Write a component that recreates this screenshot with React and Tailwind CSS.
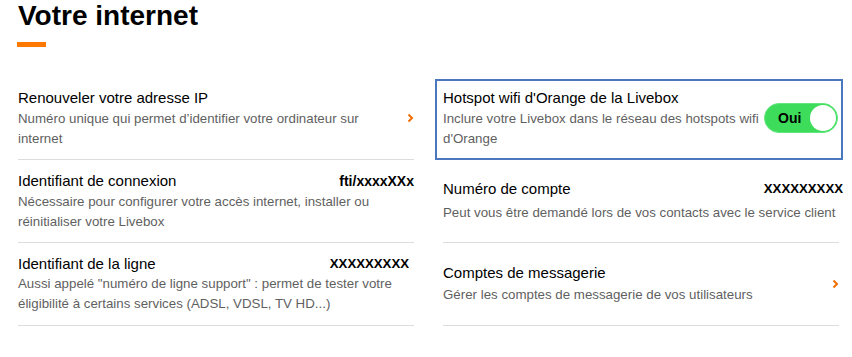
import React from 'react';

const Chevron = () => (
    <svg width="7" height="10" viewBox="0 0 7 10" className="shrink-0">
        <path d="M1.5 1.5l3.5 3.5-3.5 3.5" fill="none" stroke="#f16e00" strokeWidth="2" />
    </svg>
);

const Toggle = () => (
    <div className="shrink-0 w-[74px] h-[30px] rounded-full bg-[#3ddd5b] border border-[#63e67d] flex items-center justify-between pl-[13px] pr-[1px]">
        <span className="text-[14px] font-bold text-black">Oui</span>
        <div className="w-[26px] h-[26px] rounded-full bg-white" />
    </div>
);

const Row = ({ title, desc, value, valueSize = 'text-[14px]', chevron, gap = 'mt-[1px]' }) => (
    <div className="h-[83px] border-b border-[#dddddd] flex items-center">
        <div className={`flex-1 min-w-0 ${chevron ? 'pr-[30px]' : ''}`}>
            <div className="flex items-center justify-between leading-[20px]">
                <span className="text-[15px] text-black">{title}</span>
                {value && <span className={`${valueSize} font-bold text-black`}>{value}</span>}
            </div>
            <p className={`${gap} text-[13.3px] leading-[20px] text-[#5f5f5f]`}>{desc}</p>
        </div>
        {chevron && <Chevron />}
    </div>
);

export default function App() {
    return (
        <div className="w-[852px] h-[357px] bg-white overflow-hidden font-['Liberation_Sans',Arial,sans-serif]">
            <h1 className="pl-[18px] text-[28px] leading-[32px] font-bold text-black">Votre internet</h1>
            <div className="ml-[17px] mt-[10px] w-[29px] h-[5px] bg-[#ff7900]" />

            <div className="flex pl-[18px] mt-[30px]">
                {/* colonne gauche */}
                <div className="w-[396px]">
                    <Row
                        title="Renouveler votre adresse IP"
                        desc="Numéro unique qui permet d’identifier votre ordinateur sur internet"
                        chevron
                    />
                    <Row
                        title="Identifiant de connexion"
                        value="fti/xxxxXXx"
                        desc="Nécessaire pour configurer votre accès internet, installer ou réinitialiser votre Livebox"
                    />
                    <Row
                        title="Identifiant de la ligne"
                        value="XXXXXXXXX"
                        valueSize="text-[13.2px] pr-[5px]"
                        gap="mt-0"
                        desc={'Aussi appelé "numéro de ligne support" : permet de tester votre éligibilité à certains services (ADSL, VDSL, TV HD...)'}
                    />
                </div>

                {/* colonne droite */}
                <div className="w-[400px] ml-[29px]">
                    <div className="h-[83px] pt-[2px]">
                        <div className="-ml-[8px] h-[81px] border-2 border-[#4a77bd] pl-[6px] pr-[3px] pb-[3px] flex items-center gap-[1px]">
                            <div className="flex-1">
                                <div className="text-[15px] leading-[20px] text-black">Hotspot wifi d'Orange de la Livebox</div>
                                <p className="mt-[1px] text-[13.3px] leading-[20px] text-[#5f5f5f]">
                                    Inclure votre Livebox dans le réseau des hotspots wifi d'Orange
                                </p>
                            </div>
                            <Toggle />
                        </div>
                    </div>
                    <div className="mr-[4px]">
                        <div className="h-[83px] border-b border-[#dddddd] flex items-center">
                            <div className="flex-1">
                                <div className="flex items-center justify-between leading-[20px] -mr-[4px]">
                                    <span className="text-[15px] text-black">Numéro de compte</span>
                                    <span className="text-[13.2px] font-bold text-black">XXXXXXXXX</span>
                                </div>
                                <p className="mt-[4px] text-[13.3px] leading-[20px] text-[#5f5f5f] whitespace-nowrap">
                                    Peut vous être demandé lors de vos contacts avec le service client
                                </p>
                            </div>
                        </div>
                        <Row
                            title="Comptes de messagerie"
                            desc="Gérer les comptes de messagerie de vos utilisateurs"
                            gap="mt-[2px]"
                            chevron
                        />
                    </div>
                </div>
            </div>
        </div>
    );
}
